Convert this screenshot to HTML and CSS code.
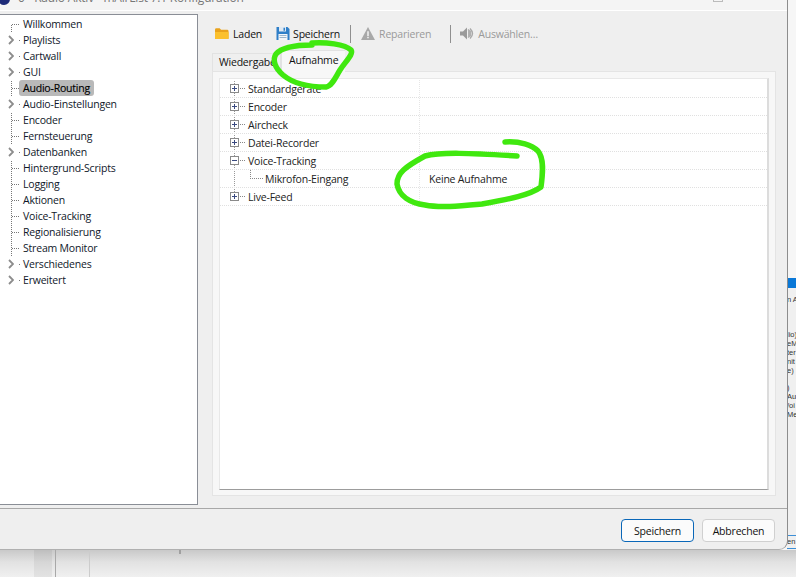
FILE: index.html
```html
<!DOCTYPE html>
<html lang="de">
<head>
<meta charset="utf-8">
<title>mAirList Konfiguration</title>
<link rel="stylesheet" href="styles.css">
</head>
<body>
<div class="desktop">
  <div class="backdrop-bottom">
    <span class="band"></span><span class="rule-dark"></span><span class="rule-light"></span><span class="tick"></span>
  </div>
  <div class="backstrip">
    <div class="strip-bar"></div>
    <div class="strip-text">
      <span class="s1">n A</span>
      <span class="s2">lio)</span><span>eM</span><span>ter</span><span>nit</span><span>e)</span>
      <span class="s3">)</span><span>Au</span><span>/oi</span><span>Me</span>
    </div>
    <div class="strip-en">en</div>
  </div>

  <div class="window">
    <header class="titlebar">
      <span class="app-dot"></span>
      <span class="title-text">0 - Radio Aktiv - mAirList 7.1 Konfiguration</span>
      <span class="win-max"></span>
      <span class="win-close">×</span>
    </header>
    <div class="main">
      <nav class="nav">
        <div class="nav-row leaf first"><span class="cell"></span>Willkommen</div>
        <div class="nav-row branch"><span class="cell"><svg class="chev" viewBox="0 0 6 10"><path d="M1 1l4 4-4 4"/></svg></span>Playlists</div>
        <div class="nav-row branch"><span class="cell"><svg class="chev" viewBox="0 0 6 10"><path d="M1 1l4 4-4 4"/></svg></span>Cartwall</div>
        <div class="nav-row branch"><span class="cell"><svg class="chev" viewBox="0 0 6 10"><path d="M1 1l4 4-4 4"/></svg></span>GUI</div>
        <div class="nav-row leaf"><span class="cell"></span><span class="selected">Audio-Routing</span></div>
        <div class="nav-row branch"><span class="cell"><svg class="chev" viewBox="0 0 6 10"><path d="M1 1l4 4-4 4"/></svg></span>Audio-Einstellungen</div>
        <div class="nav-row leaf"><span class="cell"></span>Encoder</div>
        <div class="nav-row leaf"><span class="cell"></span>Fernsteuerung</div>
        <div class="nav-row branch"><span class="cell"><svg class="chev" viewBox="0 0 6 10"><path d="M1 1l4 4-4 4"/></svg></span>Datenbanken</div>
        <div class="nav-row leaf"><span class="cell"></span>Hintergrund-Scripts</div>
        <div class="nav-row leaf"><span class="cell"></span>Logging</div>
        <div class="nav-row leaf"><span class="cell"></span>Aktionen</div>
        <div class="nav-row leaf"><span class="cell"></span>Voice-Tracking</div>
        <div class="nav-row leaf"><span class="cell"></span>Regionalisierung</div>
        <div class="nav-row leaf"><span class="cell"></span>Stream Monitor</div>
        <div class="nav-row branch"><span class="cell"><svg class="chev" viewBox="0 0 6 10"><path d="M1 1l4 4-4 4"/></svg></span>Verschiedenes</div>
        <div class="nav-row branch"><span class="cell"><svg class="chev" viewBox="0 0 6 10"><path d="M1 1l4 4-4 4"/></svg></span>Erweitert</div>
      </nav>
      <section class="content">
        <div class="toolbar">
          <button class="tool tool-laden">
            <svg class="ico" viewBox="0 0 15 13"><path d="M0 2.500Q0 1 1.500 1H5l1.500 1.500H13q1.500 0 1.500 1.500v7.500q0 1-1 1H1q-1 0-1-1z" fill="#e9a21c"/><path d="M0 5h14.500v6.500q0 1-1 1H1q-1 0-1-1z" fill="#fbc02d"/></svg>
            Laden
          </button>
          <button class="tool tool-save">
            <svg class="ico" viewBox="0 0 13 13"><path d="M0 0h11l2 2v11H0z" fill="#2f7fc8"/><path d="M2.500 0h7v4.500h-7z" fill="#dfe9f3"/><path d="M7 .8h1.500v3H7z" fill="#2f7fc8"/><path d="M2 7h9v6H2z" fill="#f4f7fa"/><path d="M3 8.500h7M3 10.500h7" stroke="#9db6cc"/></svg>
            Speichern
          </button>
          <span class="sep sep-a"></span>
          <button class="tool tool-off tool-fix">
            <svg class="ico" viewBox="0 0 13 12"><path d="M6.500 0L13 12H0z" fill="#a8a8a8"/><path d="M5.800 4h1.400v4.300H5.800zM5.800 9h1.400v1.400H5.800z" fill="#f2f2f2"/></svg>
            Reparieren
          </button>
          <span class="sep sep-b"></span>
          <button class="tool tool-off tool-sel">
            <svg class="ico" viewBox="0 0 14 12"><path d="M0 4h3l4-4v12L3 8H0z" fill="#9a9a9a"/><path d="M8 2q5 4 0 8M10 1q5 5 0 10" stroke="#a8a8a8" stroke-width="1.400" fill="none"/><path d="M8 3h3v6H8z" fill="#b0b0b0"/></svg>
            Auswählen…
          </button>
        </div>
        <div class="tabs">
          <span class="tab">Wiedergabe</span>
          <span class="tab tab-active">Aufnahme</span>
        </div>
        <div class="panel">
          <div class="grid">
            <div class="g-row"><span class="g-name"><i class="box plus"></i><i class="conn"></i>Standardgeräte</span><span class="g-val"></span></div>
            <div class="g-row"><span class="g-name"><i class="box plus"></i><i class="conn"></i>Encoder</span><span class="g-val"></span></div>
            <div class="g-row"><span class="g-name"><i class="box plus"></i><i class="conn"></i>Aircheck</span><span class="g-val"></span></div>
            <div class="g-row"><span class="g-name"><i class="box plus"></i><i class="conn"></i>Datei-Recorder</span><span class="g-val"></span></div>
            <div class="g-row"><span class="g-name"><i class="box"></i><i class="conn"></i>Voice-Tracking</span><span class="g-val"></span></div>
            <div class="g-row"><span class="g-name child"><i class="elbow"></i>Mikrofon-Eingang</span><span class="g-val">Keine Aufnahme</span></div>
            <div class="g-row"><span class="g-name last"><i class="box plus"></i><i class="conn"></i>Live-Feed</span><span class="g-val"></span></div>
          </div>
        </div>
      </section>
    </div>
    <footer class="footer">
      <button class="btn btn-default">Speichern</button>
      <button class="btn">Abbrechen</button>
    </footer>
  </div>

  <svg class="scribble" viewBox="0 0 796 577">
    <path d="M312 43C325 42 345 44 351 50C354 54 345 62 340 70C335 78 332 86 326 87C312 87 295 85 283 75C275 68 272 60 276 54C282 47 295 45 312 45"/>
    <path d="M505 142C520 141 532 145 538 151C544 158 543 172 541 187C530 195 510 199 482 204C460 206 440 208 425 205C410 203 399 196 397 184C397 173 405 167 425 156C440 152 470 153 517 156"/>
  </svg>
</div>
</body>
</html>
```

FILE: styles.css
```css
* { box-sizing: border-box; }
html, body { margin: 0; padding: 0; }
body { font-family: "Open Sans", "Liberation Sans", sans-serif; font-size: 10.500px; letter-spacing: -0.200px; color: #111; }

.desktop {
  position: relative;
  width: 796px;
  height: 577px;
  overflow: hidden;
  background: #f6f6f6;
}

/* what shows of the desktop behind the dialog */
.backdrop-bottom {
  position: absolute;
  left: 0;
  right: 0;
  top: 550px;
  height: 27px;
  background: linear-gradient(#c9c9c9, #e2e2e2 45%, #f0f0f0);
}
.band { position: absolute; left: 34px; top: 0; width: 18px; height: 27px; background: rgba(0, 0, 0, 0.05); }
.rule-dark { position: absolute; left: 55px; top: 0; width: 1px; height: 27px; background: #a8a8a8; }
.rule-light { position: absolute; left: 89px; top: 0; width: 1px; height: 27px; background: #cccccc; }
.tick { position: absolute; left: 179px; top: 0; width: 2px; height: 4px; background: #a0a0a0; }

.backstrip {
  position: absolute;
  left: 787px;
  top: 278px;
  width: 9px;
  height: 272px;
  overflow: hidden;
  background: #f0f0f0;
  font-family: "Liberation Sans", sans-serif;
  font-size: 7.500px;
  letter-spacing: 0;
  color: #333;
}
.strip-bar { height: 10px; background: #0a78d7; }
.strip-text { display: flex; flex-direction: column; line-height: 9px; white-space: nowrap; }
.strip-text span { height: 9px; }
.strip-text .s1 { margin-top: 7px; }
.strip-text .s2 { margin-top: 26px; }
.strip-text .s3 { margin-top: 8px; }
.strip-en {
  margin-top: 116px;
  height: 14px;
  line-height: 12px;
  border-top: 1px solid #3d8fd6;
  border-bottom: 1px solid #3d8fd6;
}

.window {
  position: absolute;
  left: 0;
  top: 0;
  width: 788px;
  height: 550px;
  display: flex;
  flex-direction: column;
  background: #efefef;
  border-right: 1px solid #8d8d8d;
  border-bottom: 1px solid #b0b0b0;
  border-bottom-right-radius: 9px;
}

.titlebar {
  height: 11px;
  flex: none;
  position: relative;
  overflow: hidden;
  background: #f4f4f4;
  border-bottom: 1px solid #fff;
  color: #777;
  font-size: 12px;
}
.app-dot { position: absolute; left: -2px; top: -7px; width: 12px; height: 12px; border-radius: 50%; background: #1d2a78; }
.title-text { position: absolute; left: 18px; top: -10px; line-height: 16px; white-space: nowrap; }
.win-max { position: absolute; left: 713px; top: -8px; width: 10px; height: 10px; border: 1px solid #bbb; }
.win-close { position: absolute; left: 758px; top: -12px; font-size: 16px; line-height: 16px; color: #888; }

.main { flex: 1; min-height: 0; display: flex; }

.nav {
  width: 198px;
  flex: none;
  margin: 3px 0 3px;
  padding-top: 1px;
  background: #fff;
  border-top: 1px solid #8a8e96;
  border-right: 1px solid #8a8e96;
  border-bottom: 1px solid #8a8e96;
}
.nav-row {
  height: 16px;
  display: flex;
  align-items: center;
  white-space: nowrap;
  color: #10182a;
  line-height: 16px;
}
.cell { width: 23px; height: 16px; flex: none; display: block; }
.leaf .cell {
  background:
    repeating-linear-gradient(90deg, #777 0 1px, transparent 1px 2px) 12px 8px / 8px 1px no-repeat,
    repeating-linear-gradient(0deg, #777 0 1px, transparent 1px 2px) 11px 0 / 1px 16px no-repeat;
}
.leaf.first .cell {
  background:
    repeating-linear-gradient(90deg, #777 0 1px, transparent 1px 2px) 12px 8px / 8px 1px no-repeat,
    repeating-linear-gradient(0deg, #777 0 1px, transparent 1px 2px) 11px 8px / 1px 8px no-repeat;
}
.branch .cell {
  background: linear-gradient(#777, #777) 19px 8px / 1px 1px no-repeat;
  padding: 3px 0 0 8px;
}
.chev { display: block; width: 6px; height: 10px; fill: none; stroke: #8c8c8c; stroke-width: 1.800; }
.selected {
  margin-left: -4px;
  padding: 0 4px;
  background: #b9b9b9;
  border-radius: 3px;
  color: #000;
  -webkit-text-stroke: 0.150px #000;
}

.content { flex: 1; min-width: 0; display: flex; flex-direction: column; padding: 0 11px 12px 14px; }

.toolbar { height: 38px; flex: none; display: flex; align-items: center; padding-top: 7px; }
.tool {
  display: flex;
  align-items: center;
  gap: 4px;
  padding: 0;
  border: 0;
  background: none;
  font: inherit;
  letter-spacing: inherit;
  color: #111;
}
.tool-laden { margin-left: 3px; }
.tool-save { margin-left: 14px; gap: 3px; }
.tool-off { color: #9a9a9a; }
.tool-fix { margin-left: 10px; gap: 4px; }
.tool-sel { margin-left: 9px; }
.ico { width: 14px; height: 13px; flex: none; }
.sep { width: 1px; height: 18px; background: #8f8f8f; flex: none; }
.sep-a { margin-left: 10px; }
.sep-b { margin-left: 19px; }

.tabs { height: 22px; flex: none; display: flex; align-items: flex-end; }
.tab {
  height: 18px;
  padding: 0 6px;
  line-height: 17px;
  background: #efefef;
  border: 1px solid #e2e2e2;
  border-bottom: 0;
  width: 69px;
  overflow: hidden;
  white-space: nowrap;
}
.tab-active {
  height: 22px;
  width: 64px;
  padding: 0 7px;
  line-height: 19px;
  background: #f7f7f7;
  margin-bottom: -1px;
  border-right: 0;
  position: relative;
}

.panel {
  flex: 1;
  min-height: 0;
  padding: 6px 6px 5px 6px;
  background: #f7f7f7;
  border: 1px solid #e4e4e4;
}
.grid {
  height: 100%;
  padding-top: 1px;
  background: #fff;
  border: 1px solid #e8e8e8;
  border-right: 2px solid #dcdcdc;
  border-bottom: 1px solid #9c9c9c;
}
.g-row {
  height: 18px;
  display: flex;
  align-items: center;
  border-bottom: 1px dotted #e0e0e0;
  white-space: nowrap;
  color: #222;
}
.g-name {
  width: 200px;
  height: 17px;
  flex: none;
  display: flex;
  align-items: center;
  padding-left: 10px;
  border-right: 1px dotted #e6e6e6;
  background: repeating-linear-gradient(0deg, #999 0 1px, transparent 1px 2px) 14px 0 / 1px 18px no-repeat;
}
.g-name.last { background: repeating-linear-gradient(0deg, #999 0 1px, transparent 1px 2px) 14px 0 / 1px 8px no-repeat; }
.g-name.child {
  padding-left: 31px;
  background: repeating-linear-gradient(0deg, #999 0 1px, transparent 1px 2px) 14px 0 / 1px 18px no-repeat;
}
.box {
  width: 9px;
  height: 9px;
  flex: none;
  border: 1px solid #8a8a8a;
  background: linear-gradient(#3a4a80, #3a4a80) center / 5px 1px no-repeat, #fff;
}
.box.plus {
  background:
    linear-gradient(#3a4a80, #3a4a80) center / 5px 1px no-repeat,
    linear-gradient(#3a4a80, #3a4a80) center / 1px 5px no-repeat,
    #fff;
}
.conn { width: 6px; height: 1px; margin: 0 2px 0 1px; flex: none; background: repeating-linear-gradient(90deg, #888 0 1px, transparent 1px 2px); }
.elbow {
  width: 13px;
  height: 9px;
  margin: -9px 2px 0 -1px;
  flex: none;
  border-left: 1px dotted #888;
  border-bottom: 1px dotted #888;
}
.g-val { padding-left: 9px; }

.footer {
  height: 41px;
  flex: none;
  display: flex;
  justify-content: flex-end;
  align-items: flex-start;
  gap: 8px;
  padding: 10px 12px 0 0;
  border-top: 1px solid #a8a8a8;
}
.btn {
  width: 73px;
  height: 23px;
  padding: 0;
  font: inherit;
  letter-spacing: inherit;
  color: #111;
  background: #fbfbfb;
  border: 1px solid #d0d0d0;
  border-radius: 4px;
}
.btn-default { border-color: #0a67b8; }

.scribble {
  position: absolute;
  left: 0;
  top: 0;
  width: 796px;
  height: 577px;
  fill: none;
  stroke: #40e80f;
  stroke-width: 5.500;
  stroke-linecap: round;
  stroke-linejoin: round;
  pointer-events: none;
}
```
